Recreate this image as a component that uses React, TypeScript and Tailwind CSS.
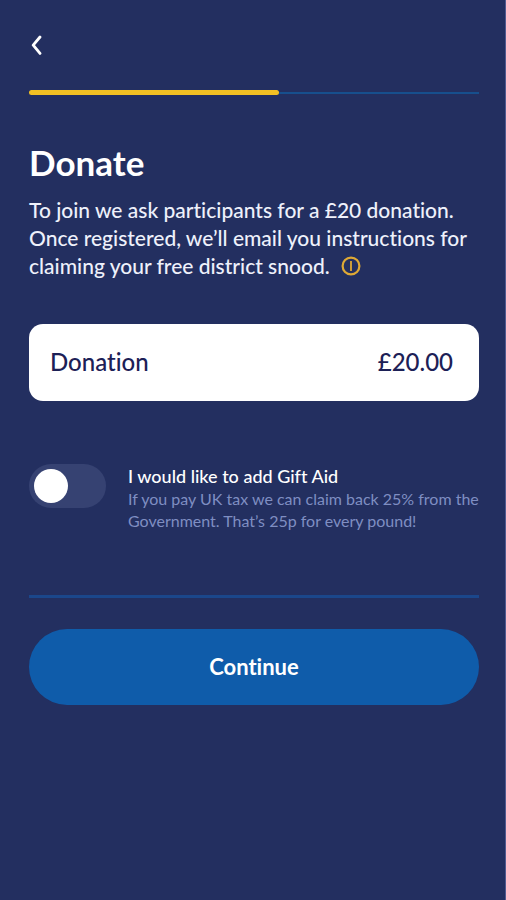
import { useState } from "react";

const PROGRESS = 278 / 500;

function BackIcon() {
  return (
    <svg viewBox="0 0 14 20" className="h-5 w-3.5" fill="none" stroke="currentColor" strokeWidth="2.8" strokeLinecap="round" strokeLinejoin="round">
      <path d="M11 2 4.2 10.2 11 18.4" />
    </svg>
  );
}

function InfoIcon() {
  return (
    <svg viewBox="0 0 20 20" className="size-5" fill="none" stroke="currentColor" strokeWidth="1.8">
      <circle cx="10" cy="10" r="8.4" strokeWidth="2.2" />
      <path d="M10 5v10" />
    </svg>
  );
}

export default function App() {
  const [giftAid, setGiftAid] = useState(false);

  return (
    <main className="min-h-screen border-r border-[#505a8f] bg-[#232f60] pt-[35px] pr-[26px] pb-8 pl-[29px] font-['Lato',sans-serif] text-white [font-variant-ligatures:none]">
      <button type="button" aria-label="Back" className="block">
        <BackIcon />
      </button>

      {/* Progress */}
      <div className="mt-[35px] flex h-[5px] items-center">
        <div className="h-[5px] rounded-full bg-[#f2c023]" style={{ width: `${PROGRESS * 100}%` }} />
        <div className="h-[2px] flex-1 bg-[#174f8d]" />
      </div>

      <h1 className="mt-[47px] text-[35px] leading-[40px] font-bold">Donate</h1>
      <p className="mt-[14px] text-[21px] leading-[28px] font-medium text-[#eef1fb]">
        To join we ask participants for a £20 donation. Once registered, we’ll email you instructions for claiming your
        free district snood.{" "}
        <button type="button" aria-label="More about the snood" className="mb-1.5 ml-1.5 inline-block align-middle text-[#dfa935]">
          <InfoIcon />
        </button>
      </p>

      <div className="mt-[42px] flex h-[77px] items-center justify-between rounded-[14px] bg-white pr-[26px] pl-[21px] text-[24px] leading-[30px] font-medium text-[#1c2056]">
        <span>Donation</span>
        <span>£20.00</span>
      </div>

      {/* Gift Aid */}
      <label className="mt-[63px] flex items-start gap-[22px]">
        <span className="relative shrink-0">
          <input
            type="checkbox"
            role="switch"
            checked={giftAid}
            onChange={(e) => setGiftAid(e.target.checked)}
            aria-label="I would like to add Gift Aid"
            className="peer block h-[44px] w-[77px] appearance-none rounded-full bg-[#364272] checked:bg-[#0f5caa]"
          />
          <span className="pointer-events-none absolute top-[5px] left-[5px] size-[34px] rounded-full bg-white transition-transform peer-checked:translate-x-[33px]" />
        </span>
        <span className="flex-1">
          <span className="block text-[18px] leading-[24px] font-medium">I would like to add Gift Aid</span>
          <span className="block text-[16px] leading-[22px] text-[#7f8ec2]">
            If you pay UK tax we can claim back 25% from the Government. That’s 25p for every pound!
          </span>
        </span>
      </label>

      <hr className="mt-[63px] border-t-[3px] border-[#1b478b]" />

      <button type="button" className="mt-[31px] h-[76px] w-full rounded-full bg-[#0f5caa] text-[22px] leading-[28px] font-bold">
        Continue
      </button>
    </main>
  );
}
